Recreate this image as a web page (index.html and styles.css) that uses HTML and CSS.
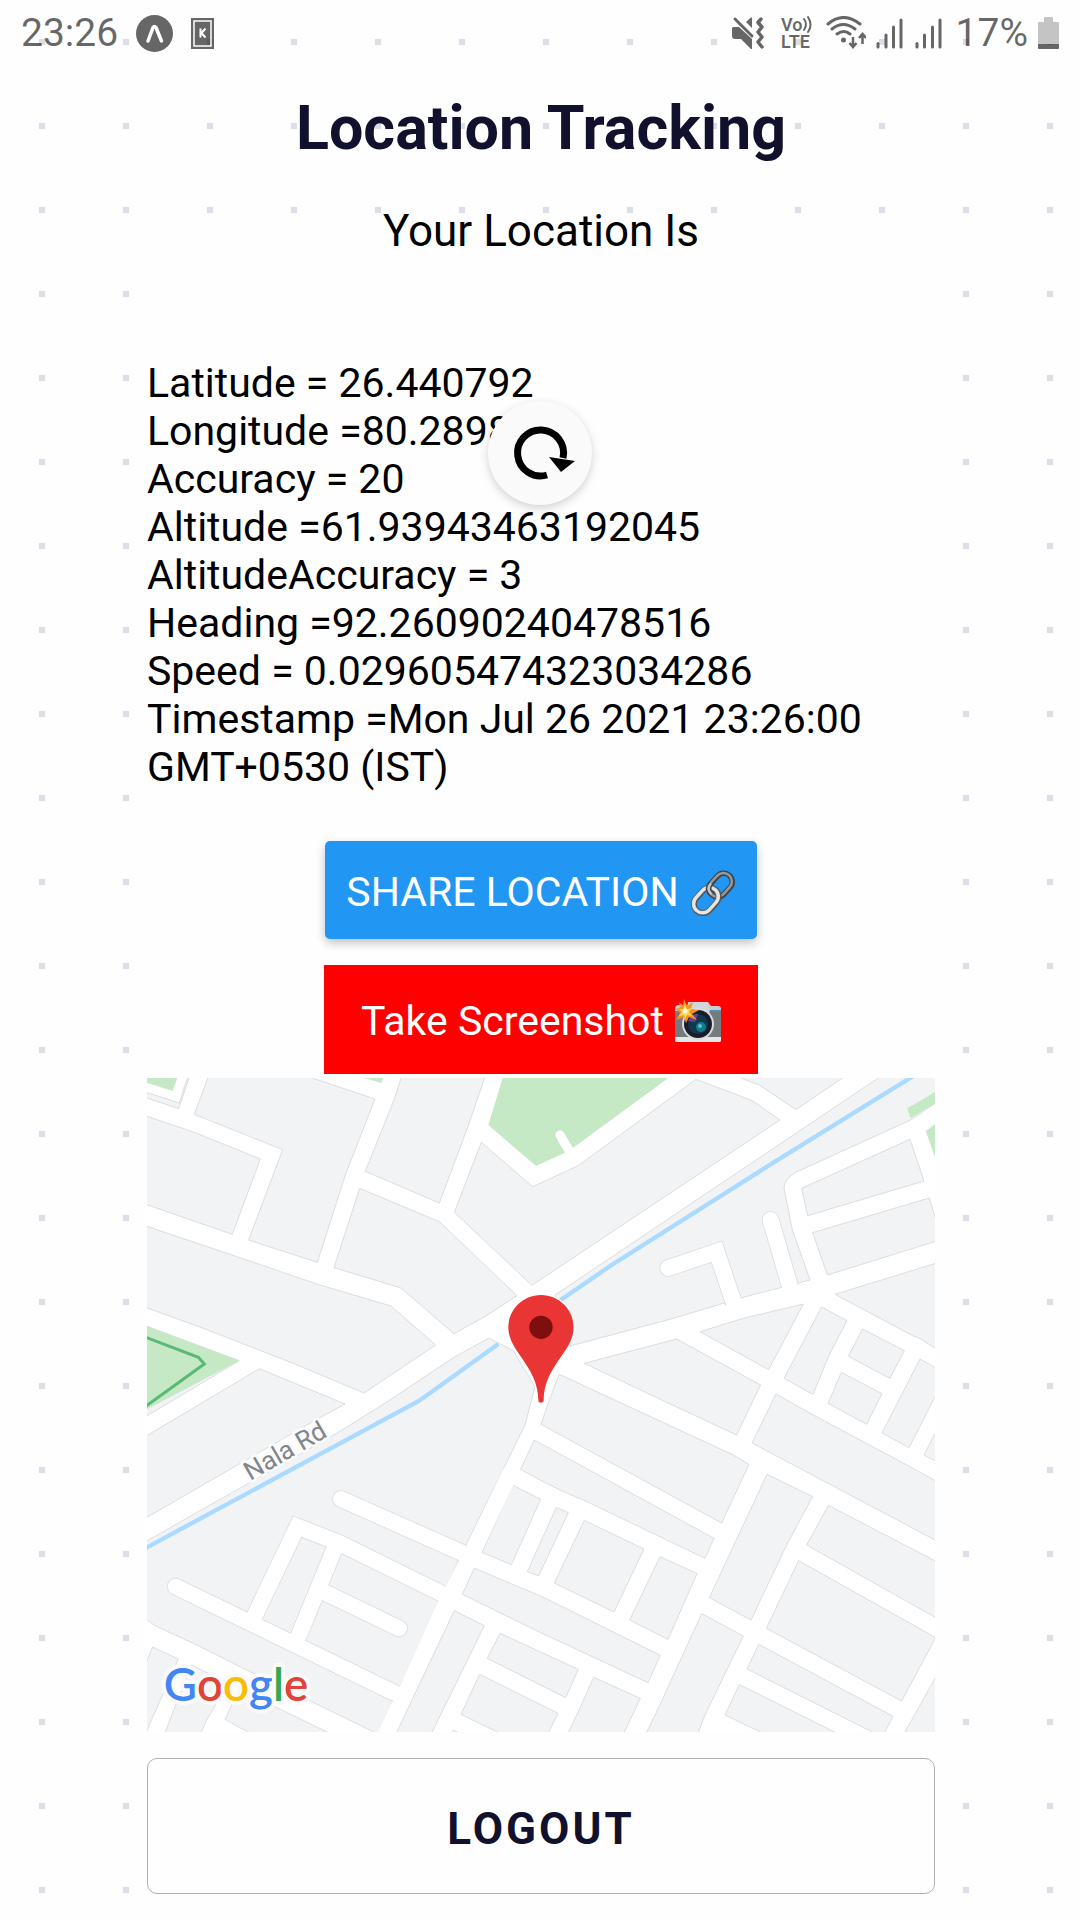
FILE: index.html
```html
<!DOCTYPE html>
<html lang="en">
<head>
<meta charset="utf-8">
<meta name="viewport" content="width=device-width, initial-scale=1">
<title>Location Tracking</title>
<link rel="stylesheet" href="styles.css">
</head>
<body>
<div class="screen">
  <header class="status-bar">
    <div class="status-left">
      <span class="clock">23:26</span>
      <svg class="icon-expo" viewBox="0 0 37 37" aria-hidden="true">
        <circle cx="18.500" cy="18.500" r="18.500" fill="currentColor"/>
        <path d="M12 26 17 12.500q1.500-2 3 0L25.500 26" fill="none" stroke="#fff" stroke-width="3.500" stroke-linecap="round" stroke-linejoin="round"/>
      </svg>
      <svg class="icon-k" viewBox="0 0 23 31" aria-hidden="true">
        <path fill="currentColor" d="M0 0h23v31H0z"/>
        <path fill="none" stroke="#fff" stroke-width="1.500" d="M3 3h17v25H3z"/>
        <path fill="none" stroke="#fff" stroke-width="2" d="M9.500 10.500v9M14.500 10.500l-4 4.500 4 4.500"/>
      </svg>
    </div>
    <div class="status-right">
      <svg class="icon-wide" viewBox="0 0 40 34" aria-hidden="true">
        <path fill="currentColor" d="M3 11h6l13 12v10h-1L11 23H5q-3 0-3-3v-8zM16 6l5-4.500h1V12z"/>
        <path fill="none" stroke="currentColor" stroke-width="3" stroke-linecap="round" d="M5 3l17 17"/>
        <path fill="none" stroke="currentColor" stroke-width="3.500" stroke-linecap="round" stroke-linejoin="round" d="M31 3l-3 3.500 4 4.500-4 5 4 5-4 5 4 5"/>
      </svg>
      <svg class="icon-volte" viewBox="0 0 36 34" aria-hidden="true">
        <text class="volte" x="1" y="15">Vo</text>
        <text class="volte" x="1" y="32">LTE</text>
        <path fill="none" stroke="currentColor" stroke-width="2" stroke-linecap="round" d="M24 3q4 5 0 11M28 1q5 8 0 15"/>
      </svg>
      <svg class="icon-wide" viewBox="0 0 40 34" aria-hidden="true">
        <g fill="none" stroke="currentColor" stroke-width="3" stroke-linecap="round">
          <path d="M2 8q15-13 32 0M6 13q11-9 23 0M11 18q7-5 13 0"/>
        </g>
        <circle cx="17.500" cy="24" r="2.500" fill="currentColor"/>
        <path fill="none" stroke="currentColor" stroke-width="2.500" d="M27 21v9M23.500 27l3.500 4 3.500-4M36.500 28v-9M33 22l3.500-4 3.500 4"/>
      </svg>
      <svg class="icon-signal" viewBox="0 0 28 34" aria-hidden="true">
        <path fill="none" stroke="currentColor" stroke-width="3" stroke-linecap="round" d="M2 27.500v3.500M10 19v12M17.500 11v20M25 4v27"/>
      </svg>
      <svg class="icon-signal" viewBox="0 0 28 34" aria-hidden="true">
        <path fill="none" stroke="currentColor" stroke-width="3" stroke-linecap="round" d="M3 27.500v3.500M10.500 19v12M18.500 11v20M26 4v27"/>
      </svg>
      <span class="battery-level">17%</span>
      <svg class="icon-battery" viewBox="0 0 21 34" aria-hidden="true">
        <path fill="#c4c4c4" d="M6 2q0-1 1-1h7q1 0 1 1v4h5q1 0 1 1v21H0V7q0-1 1-1h5z"/>
        <path fill="currentColor" d="M0 28h21v4q0 1-1 1H1q-1 0-1-1z"/>
      </svg>
    </div>
  </header>

  <main class="content">
    <h1 class="title">Location Tracking</h1>
    <p class="subtitle">Your Location Is</p>

    <section class="panel">
      <div class="details">
        <p>Latitude = 26.440792</p>
        <p>Longitude =80.2898</p>
        <p>Accuracy = 20</p>
        <p>Altitude =61.93943463192045</p>
        <p>AltitudeAccuracy = 3</p>
        <p>Heading =92.26090240478516</p>
        <p>Speed = 0.029605474323034286</p>
        <p>Timestamp =Mon Jul 26 2021 23:26:00 GMT+0530 (IST)</p>
      </div>

      <div class="actions">
        <button class="btn btn-share" type="button">
          SHARE LOCATION
          <svg class="emoji" viewBox="0 0 46 46" aria-hidden="true">
            <g fill="none" transform="rotate(-48 23 23)">
              <rect x="21" y="15" width="26" height="17" rx="8.500" stroke="#3f4346" stroke-width="5.500"/>
              <rect x="21" y="14.500" width="26" height="17" rx="8.500" stroke="#96999b" stroke-width="2.500"/>
              <rect x="-1" y="14" width="28" height="18" rx="9" stroke="#55585b" stroke-width="6"/>
              <rect x="-1" y="13.500" width="28" height="18" rx="9" stroke="#e4e5e5" stroke-width="3.500"/>
              <path d="M21 23q0-8 8-8" stroke="#3f4346" stroke-width="5.500"/>
              <path d="M21 23q0-8 8-8" stroke="#c4c6c7" stroke-width="2.500"/>
            </g>
          </svg>
        </button>
        <button class="btn btn-shot" type="button">
          Take Screenshot
          <svg class="emoji" viewBox="0 0 46 46" aria-hidden="true">
            <path fill="#c9cdd0" d="M13 6q0-3 2-3h18l3 4h7q3 0 3 3v31q0 2-2 2H2q-2 0-2-2V10q0-4 4-4z"/>
            <path fill="#777a7c" d="M0 12h46v26H0z"/>
            <path fill="#4d8ec5" d="M35 11h11v2H35z"/>
            <path fill="#e4e6e7" d="M0 38h46v3q0 2-2 2H2q-2 0-2-2z"/>
            <path fill="#d3d6d9" d="M13 3h20l2 14H11z"/>
            <circle cx="23" cy="25" r="16" fill="#d9dcdf"/>
            <circle cx="23" cy="25" r="14" fill="#191d29"/>
            <circle cx="23" cy="25" r="10" fill="#12384d"/>
            <path fill="#664295" d="M13 22q3-8 10-7l-3 8z"/>
            <circle cx="26" cy="28" r="5" fill="#15798c"/>
            <circle cx="25" cy="27" r="2" fill="#51c4cc"/>
            <path fill="#f7941d" d="M9 0l3 7 6-4-2 7 8 1-7 4 5 6-8-3-3 6-2-6-8 3 4-7-4-4 5-2-3-5 5 3z"/>
            <path fill="#ffd45a" d="M10 5l2 5 5-1-3 4 3 4-5-1-2 4-1-4-5 1 3-4-3-3 4 0z"/>
            <circle cx="10" cy="12" r="2.500" fill="#fff7d5"/>
          </svg>
        </button>
      </div>

      <svg class="map" viewBox="21 24 2364 1962" role="img" aria-label="Map">
        <rect x="21" y="24" width="2364" height="1962" fill="#fff"/>
        <g class="blocks">
          <path d="M0 61 118 99 145 15 150 15 116 116 0 77z"/>
          <path d="M207 15H490L705 87 617 312 532 577 326 510 428 239 163 133z"/>
          <path d="M0 132 158 185 361 267 277 493 0 397z"/>
          <path d="M786 15H1037L980 180 898 399 676 304 764 85z"/>
          <path d="M1024 217 1178 350 1315 287 1668 28 1837 92 1920 150 1176 646 943 427z"/>
          <path d="M659 355 898 455 1131 677 1035 740 942 791 783 654 582 593z"/>
          <path d="M0 462 270 553 540 645 753 708 887 825 672 969 460 880 190 775 0 706z"/>
          <path d="M0 761 298 872 0 1050z"/>
          <path d="M0 1109 150 1020 358 896 615 1002 500 1065 0 1354z"/>
          <path d="M1047 804 940 863 750 990 590 1090 0 1424V1635L45 1667 160 1720 345 1812 720 1995 758 1895 780 1848 897 1597 978 1425 1155 1065 1185 950 1120 842z"/>
          <path d="M38 1731 115 1767 15 1995V1785z"/>
          <path d="M155 1785 265 1840 200 1950 180 1995H72z"/>
          <path d="M298 1858 580 1995H340L255 1948z"/>
          <path d="M943 1622 1033 1667 985 1765 872 1995H766z"/>
          <path d="M1080 1690 1315 1798 1277 1883 1042 1765z"/>
          <path d="M1019 1813 1254 1930 1222 1995H1090L963 1933z"/>
          <path d="M940 1980 970 1995H935z"/>
          <path d="M1003 1494 1115 1542 1200 1577 1561 1756 1524 1838 1200 1687 967 1573z"/>
          <path d="M1361 1822 1501 1885 1449 1995H1281L1315 1925z"/>
          <path d="M1685 1631 1810 1698 1695 1935 1672 1995H1516L1555 1915z"/>
          <path d="M1118 1245 1202 1288 1114 1484 1026 1447z"/>
          <path d="M1249 1312 1285 1328 1196 1518 1162 1505z"/>
          <path d="M1333 1351 1512 1437 1422 1626 1243 1539z"/>
          <path d="M1560 1460 1671 1511 1584 1708 1469 1650z"/>
          <path d="M1183 1110 1722 1405 1695 1465 1330 1290 1270 1265 1200 1230 1142 1198z"/>
          <path d="M1258 913 1780 1155 1827 1183 1745 1359 1203 1063 1228 990z"/>
          <path d="M1333 880 1610 807 1862 945 1840 990 1790 1095 1565 990z"/>
          <path d="M1881 1213 2018 1280 1940 1425 1833 1650 1708 1583z"/>
          <path d="M2065 1306 2400 1480V1650L2000 1425z"/>
          <path d="M1976 1472 2387 1703 2285 1893 1879 1675z"/>
          <path d="M1856 1723 2259 1939 2230 1995H2215L1821 1797z"/>
          <path d="M1798 1844 2102 1995H1880L1755 1935z"/>
          <path d="M2400 1798 2290 1995H2400z"/>
          <path d="M1908 972 2020 1035 2310 1190 2400 1240V1418L1836 1119z"/>
          <path d="M2045 711 2121 752 2065 860 2019 973 1932 925z"/>
          <path d="M2168 777 2293 842 2250 925 2125 859z"/>
          <path d="M2104 907 2226 971 2180 1063 2064 1000z"/>
          <path d="M2340 867 2420 912 2307 1133 2226 1089z"/>
          <path d="M2400 1060 2352 1155 2400 1180z"/>
          <path d="M2085 673 2400 576V845L2340 805 2320 798z"/>
          <path d="M1680 785 1810 745 1990 702 1886 899z"/>
          <path d="M1245 675 2228 15H2400V90L2312 150 1965 308Q1932 330 1932 355L1957 480 2010 630 1806 683 1600 745 1290 828z"/>
          <path d="M2310 208 2352 333 2003 437 1985 355z"/>
          <path d="M2368 384 2400 490V510L2062 615 2018 488z"/>
          <path d="M1780 15 1858 45 1968 119 2121 15z"/>
        </g>
        <g class="parks">
          <path d="M21 24H112L98 63 21 38z"/>
          <path d="M672 24H729L725 39z"/>
          <path d="M1088 24 1045 165 1188 288 1275 248 1310 226 1585 24z"/>
          <path d="M21 769 298 872 21 1018z"/>
          <path d="M2302 115 2385 66V100L2312 145z"/>
          <path d="M2385 163 2357 183 2385 262z"/>
        </g>
        <path class="trail" d="M10 799 175 862 193 882 10 1014"/>
        <g class="road-edge">
          <path d="M603 1287 970 1450"/>
          <path d="M345 1635 472 1370 595 1418 910 1573"/>
          <path d="M107 1550 760 1867"/>
          <path d="M582 1440 477 1695"/>
          <path d="M560 1570 777 1675"/>
          <path d="M1892 450 1953 660"/>
          <path d="M1585 594 1730 545 1782 700"/>
        </g>
        <g class="road">
          <path d="M603 1287 970 1450"/>
          <path d="M345 1635 472 1370 595 1418 910 1573"/>
          <path d="M107 1550 760 1867"/>
          <path d="M582 1440 477 1695"/>
          <path d="M560 1570 777 1675"/>
          <path d="M1892 450 1953 660"/>
          <path d="M1585 594 1730 545 1782 700"/>
          <path d="M1110 1210 1002 1437 920 1597 805 1850 730 2010"/>
          <path d="M1780 716 1970 668"/>
        </g>
        <path class="lane" d="M1260 195 1292 250"/>
        <path class="river" d="M10 1438 838 992 1075 822M1250 698 1415 585 1900 278 2330 12"/>
        <text class="road-name" transform="translate(331 1233) rotate(-30)">Nala Rd</text>
        <text class="map-brand" x="71" y="1892"><tspan class="g-blue">G</tspan><tspan class="g-red">o</tspan><tspan class="g-yellow">o</tspan><tspan class="g-blue">g</tspan><tspan class="g-green">l</tspan><tspan class="g-red">e</tspan></text>
        <path class="pin" d="M1203 675c54 0 98 44 98 97 0 74-89 115-90 219q0 7-8 7t-8-7c-1-104-90-145-90-219 0-53 44-97 98-97z"/>
        <circle cx="1203" cy="772" r="35" fill="#7f0f0f"/>
      </svg>

      <button class="btn-logout" type="button">LOGOUT</button>
    </section>
  </main>

  <div class="refresh" role="status" aria-label="Refreshing">
    <svg viewBox="0 0 104 104" aria-hidden="true">
      <path d="M59 74A23 23 0 1 1 75 57" fill="none" stroke="#000" stroke-width="7"/>
      <path d="M61 56 87 60 73 71z" fill="#000"/>
    </svg>
  </div>
</div>
</body>
</html>
```
FILE: styles.css
```css
* {
  box-sizing: border-box;
}

body {
  margin: 0;
  background: #fefefe;
  color: #000;
  font-family: Roboto, "Liberation Sans", sans-serif;
}

h1,
p {
  margin: 0;
}

button {
  font-family: inherit;
  cursor: pointer;
}

.screen {
  position: relative;
  min-height: 100vh;
  background-color: #fefefe;
  background-image: conic-gradient(from 90deg at 78px 78px, #dcdde6 90deg, transparent 0);
  background-size: 84px 84px;
  background-position: -39px -39px;
}

/* Status bar */

.status-bar {
  display: flex;
  justify-content: space-between;
  align-items: center;
  height: 66px;
  padding: 0 21px;
  color: rgba(0, 0, 0, 0.6);
  font-size: 39px;
  line-height: 46px;
}

.status-left,
.status-right {
  display: flex;
  align-items: center;
}

.status-left {
  gap: 18px;
}

.status-right {
  gap: 10px;
}

.icon-expo {
  width: 37px;
  height: 37px;
}

.icon-k {
  width: 23px;
  height: 31px;
}

.icon-wide {
  width: 40px;
  height: 34px;
}

.icon-volte {
  width: 36px;
  height: 34px;
  overflow: visible;
}

.icon-signal {
  width: 28px;
  height: 34px;
}

.icon-battery {
  width: 21px;
  height: 34px;
}

.volte {
  font-size: 18px;
  font-weight: 600;
  fill: currentColor;
}

.battery-level {
  padding-left: 4px;
}

/* Content */

.content {
  padding: 26px 145px 26px 147px;
}

.title {
  color: #11112d;
  font-size: 61px;
  line-height: 72px;
  font-weight: 700;
  text-align: center;
}

.subtitle {
  margin-top: 41px;
  font-size: 44px;
  line-height: 52px;
  text-align: center;
}

.panel {
  padding-top: 102px;
  background: #fefefe;
}

.details {
  font-size: 41px;
  line-height: 48px;
}

.actions {
  display: flex;
  flex-direction: column;
  align-items: center;
  gap: 26px;
  padding: 50px 0 4px;
}

.btn {
  display: flex;
  align-items: center;
  gap: 11px;
  border: 0;
  color: #fff;
  font-size: 41px;
  line-height: 49px;
}

.btn-share {
  padding: 27px 21px 22px;
  border-radius: 5px;
  background: #2196f3;
  box-shadow: 0 4px 10px rgba(0, 0, 0, 0.24);
}

.btn-shot {
  padding: 32px 37px 28px;
  background: #f00;
}

.emoji {
  width: 46px;
  height: 46px;
}

.refresh {
  position: absolute;
  top: 401px;
  left: 50%;
  width: 104px;
  height: 104px;
  margin-left: -52px;
  border-radius: 50%;
  background: #fafafa;
  box-shadow: 0 3px 10px rgba(0, 0, 0, 0.18);
}

/* Map */

.map {
  display: block;
  width: 100%;
}

.blocks {
  fill: #f1f3f5;
  stroke: #dcdde0;
  stroke-width: 3;
}

.parks {
  fill: #c5e8c5;
}

.trail {
  fill: none;
  stroke: #5bb974;
  stroke-width: 9;
}

.road-edge,
.road {
  fill: none;
  stroke-linecap: round;
  stroke-linejoin: miter;
}

.road-edge {
  stroke: #dcdde0;
  stroke-width: 53;
}

.road {
  stroke: #fff;
  stroke-width: 48;
}

.lane {
  stroke: #fff;
  stroke-width: 28;
  stroke-linecap: round;
}

.river {
  fill: none;
  stroke: #aadaff;
  stroke-width: 13;
}

.road-name {
  fill: #80868b;
  stroke: #fafafa;
  stroke-width: 16;
  stroke-linejoin: round;
  paint-order: stroke;
  font-size: 78px;
}

.map-brand {
  stroke: #fafafa;
  stroke-width: 24;
  stroke-linejoin: round;
  paint-order: stroke;
  font-family: Lato, sans-serif;
  font-size: 137px;
  font-weight: 600;
}

.g-blue {
  fill: #4285f4;
}

.g-red {
  fill: #e04438;
}

.g-yellow {
  fill: #fbbc05;
}

.g-green {
  fill: #34a853;
}

.pin {
  fill: #ea3535;
  stroke: #fff;
  stroke-width: 8;
  paint-order: stroke;
}

.btn-logout {
  display: block;
  width: 100%;
  margin-top: 26px;
  padding: 44px 0 38px;
  border: 1px solid #b0b0b2;
  border-radius: 10px;
  background: #fefefe;
  color: #11112d;
  font-size: 44px;
  line-height: 52px;
  font-weight: 700;
  letter-spacing: 3px;
}
```
